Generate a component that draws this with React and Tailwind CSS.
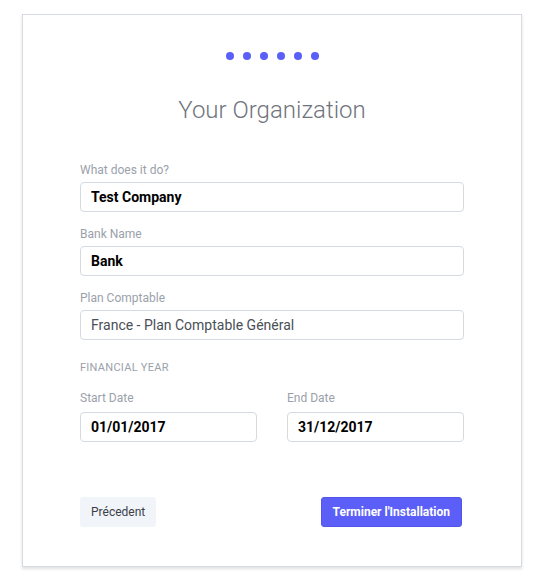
import React, { useState } from 'react';

function Field({ label, value, bold = true, className = '' }) {
  return (
    <div className={className}>
      <label className="block text-[12px] leading-[16px] text-[#9aa1ab] mb-[4px]">{label}</label>
      <input
        type="text"
        defaultValue={value}
        className={`w-full h-[30px] px-[10px] border border-[#d5dae1] rounded-[4px] text-[14px] outline-none ${bold ? 'font-bold text-black' : 'text-[#4a4f57]'}`}
      />
    </div>
  );
}

export default function App() {
  const [step] = useState(6);

  return (
    <div className="min-h-screen bg-white font-['Roboto',sans-serif] pt-[14px]">
      <div className="ml-[22px] w-[500px] border border-[#d6dbe1] bg-white shadow-[0_2px_3px_rgba(0,0,0,0.12)] px-[57px] pt-[37px] pb-[39px]">
        <div className="flex justify-center gap-[9px]">
          {Array.from({ length: step }).map((_, i) => (
            <span key={i} className="w-[8px] h-[8px] rounded-full bg-[#5b5ef7]"></span>
          ))}
        </div>

        <h1 className="mt-[34px] text-center text-[24px] leading-[32px] font-light text-[#6f747c]">Your Organization</h1>

        <Field className="mt-[36px]" label="What does it do?" value="Test Company" />
        <Field className="mt-[14px]" label="Bank Name" value="Bank" />
        <Field className="mt-[14px]" label="Plan Comptable" value="France - Plan Comptable Général" bold={false} />

        <div className="mt-[20px] text-[11px] leading-[16px] tracking-wide uppercase text-[#9aa1ab]">Financial Year</div>

        <div className="mt-[14px] grid grid-cols-2 gap-[30px]">
          <div>
            <label className="block text-[12px] leading-[16px] text-[#9aa1ab] mb-[6px]">Start Date</label>
            <input
              type="text"
              defaultValue="01/01/2017"
              className="w-full h-[30px] px-[10px] border border-[#d5dae1] rounded-[4px] text-[14px] font-bold text-black outline-none"
            />
          </div>
          <div>
            <label className="block text-[12px] leading-[16px] text-[#9aa1ab] mb-[6px]">End Date</label>
            <input
              type="text"
              defaultValue="31/12/2017"
              className="w-full h-[30px] px-[10px] border border-[#d5dae1] rounded-[4px] text-[14px] font-bold text-black outline-none"
            />
          </div>
        </div>

        <div className="mt-[55px] flex justify-between items-center">
          <button className="h-[30px] px-[11px] rounded-[3px] bg-[#f1f4f8] text-[12px] text-[#3a4049]">Précedent</button>
          <button className="mr-[2px] h-[30px] px-[11px] rounded-[3px] bg-[#5c5ff7] border border-[#5255ec] text-[12px] font-bold text-white">Terminer l'Installation</button>
        </div>
      </div>
    </div>
  );
}
